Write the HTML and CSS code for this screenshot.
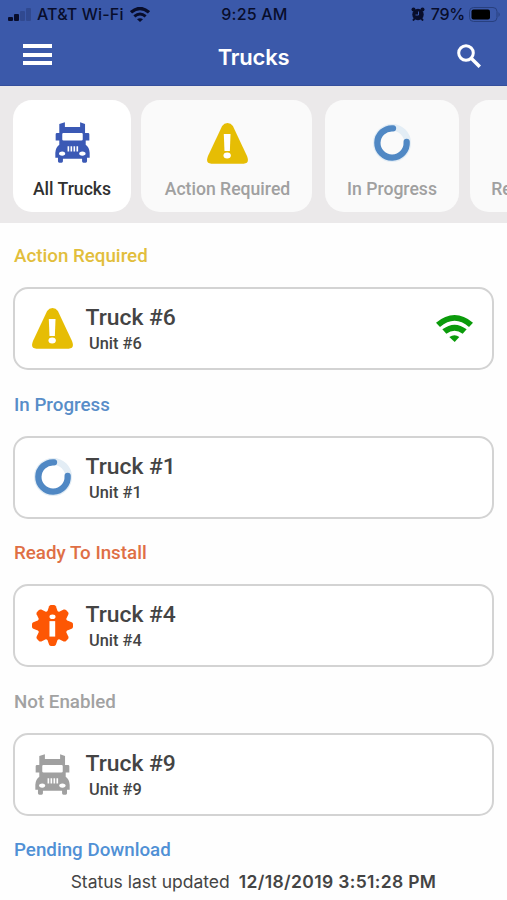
FILE: index.html
```html
<!DOCTYPE html>
<html lang="en">
<head>
<meta charset="utf-8">
<title>Trucks</title>
<link rel="stylesheet" href="styles.css">
</head>
<body>
<svg class="defs" width="0" height="0" aria-hidden="true">
  <symbol id="truck" viewBox="0 0 106 122">
    <path fill="currentColor" fill-rule="evenodd" d="M13 5L30 0V14H76V0L91 5V32H100Q104 32 104 36V55H93V68Q104 76 105 92V107H97V118Q97 122 93 122H86Q82 122 82 118V110H24V118Q24 122 20 122H13Q9 122 9 118V107H1V92Q2 76 13 68V55H2V36Q2 32 6 32H13ZM25 32Q22 32 22 36V52Q22 55 26 55H80Q84 55 84 52V36Q84 32 81 32ZM38 72V88H43V72ZM47 72V88H52V72ZM56 72V88H61V72ZM65 72V88H70V72ZM22 88C9 88 9 101 22 101C34 101 34 88 22 88ZM83 88C70 88 70 101 83 101C96 101 96 88 83 88Z"/>
  </symbol>
  <symbol id="warning" viewBox="0 0 122 122">
    <path fill="#e6bd04" d="M61 0Q71 0 77 9L119 98Q128 121 109 121H13Q-6 121 3 98L45 9Q51 0 61 0Z"/>
    <path fill="#fff" d="M50 33H70L68 83H52Z"/><ellipse cx="60" cy="97" rx="11" ry="9" fill="#fff"/>
  </symbol>
  <symbol id="progress" viewBox="0 0 114 114">
    <circle cx="57" cy="57" r="47" fill="none" stroke="#e3edf5" stroke-width="20"/>
    <path fill="none" stroke="#5088c4" stroke-width="19" stroke-linecap="round" d="M60 13A44 44 0 1 0 101 54"/>
  </symbol>
  <symbol id="gear" viewBox="-61 -61 122 122">
    <g fill="#fd5704"><circle r="45"/>
      <g id="teeth"><path id="tooth" d="M-16 -40L-10 -57Q-8 -61 -4 -61H4Q8 -61 10 -57L16 -40V40L10 57Q8 61 4 61H-4Q-8 61 -10 57L-16 40Z"/><use href="#tooth" transform="rotate(90)"/></g>
      <use href="#teeth" transform="rotate(45)"/>
    </g>
    <g fill="#fff"><ellipse cy="-26" rx="9" ry="7"/><path d="M-9 -13H8V33H-9Z"/></g>
  </symbol>
  <symbol id="wifi" viewBox="0 0 111 81">
    <g fill="currentColor"><path d="M0 23Q56 -23 111 23L99 36Q56 -1 12 36Z"/><path d="M19 43Q56 15 92 43L80 56Q56 38 31 56Z"/><path d="M40 66Q56 56 70 66L56 81Z"/></g>
  </symbol>
</svg>
<div class="app">
  <header class="top">
    <div class="status">
      <div class="carrier">
        <svg class="signal" viewBox="0 0 24 13"><rect y="9" width="5" height="4" rx="1"/><rect x="6" y="6" width="5" height="7" rx="1"/><g opacity=".2"><rect x="12" y="3" width="5" height="10" rx="1"/><rect x="18" width="5" height="13" rx="1"/></g></svg>
        <span class="network">AT&amp;T Wi-Fi</span>
        <svg class="status-wifi" viewBox="0 0 60 45"><g fill="none" stroke="#080d2b"><path stroke-width="10" d="M3 16Q30 -7 57 16"/><path stroke-width="9" d="M13 28Q30 14 47 28"/></g><path d="M21 37Q30 30 39 37L30 45Z"/></svg>
      </div>
      <span class="clock">9:25 AM</span>
      <div class="power">
        <svg class="alarm" viewBox="0 0 14 14"><circle cx="7" cy="7.5" r="5.7"/><circle cx="2.5" cy="2.5" r="2"/><circle cx="11.5" cy="2.5" r="2"/><path d="M2 13.5L4 11M12 13.5L10 11" stroke="#080d2b" stroke-width="2"/><path d="M7.5 4.5V8H4.5" fill="none" stroke="#3b59aa" stroke-width="1"/></svg>
        <span class="percent">79%</span>
        <svg class="battery" viewBox="0 0 32 15"><rect x=".5" y=".5" width="27.500" height="14" rx="4" fill="none" stroke="#28407f"/><rect x="2.500" y="2.500" width="18.500" height="10" rx="2" fill="#000"/><path d="M29.500 5Q32 7.500 29.500 10Z" fill="#28407f"/></svg>
      </div>
    </div>
    <div class="nav">
      <div class="menu"><i></i><i></i><i></i></div>
      <h1><span>Trucks</span></h1>
      <svg class="search" viewBox="0 0 24 24"><g fill="none" stroke="#fff" stroke-width="3"><circle cx="9" cy="9" r="7.300"/><path d="M14.200 14.200L22.800 22.800" stroke-width="3.500"/></g></svg>
    </div>
  </header>
  <nav class="filters">
    <div class="filter all"><svg class="truck"><use href="#truck"/></svg><span>All Trucks</span></div>
    <div class="filter action"><svg class="warning"><use href="#warning"/></svg><span>Action Required</span></div>
    <div class="filter running"><svg class="progress"><use href="#progress"/></svg><span>In Progress</span></div>
    <div class="filter ready"><svg class="gear"><use href="#gear"/></svg><span>Ready To Install</span></div>
  </nav>
  <main>
    <section>
      <h2 class="yellow"><span>Action Required</span></h2>
      <article><div class="icon"><svg class="warning"><use href="#warning"/></svg></div><div class="info"><h3>Truck #6</h3><p>Unit #6</p></div><svg class="online"><use href="#wifi"/></svg></article>
    </section>
    <section>
      <h2 class="blue"><span>In Progress</span></h2>
      <article><div class="icon"><svg class="progress"><use href="#progress"/></svg></div><div class="info"><h3>Truck #1</h3><p>Unit #1</p></div></article>
    </section>
    <section>
      <h2 class="orange"><span>Ready To Install</span></h2>
      <article><div class="icon"><svg class="gear"><use href="#gear"/></svg></div><div class="info"><h3>Truck #4</h3><p>Unit #4</p></div></article>
    </section>
    <section>
      <h2 class="gray"><span>Not Enabled</span></h2>
      <article><div class="icon"><svg class="truck"><use href="#truck"/></svg></div><div class="info"><h3>Truck #9</h3><p>Unit #9</p></div></article>
    </section>
    <section>
      <h2 class="sky"><span>Pending Download</span></h2>
    </section>
  </main>
  <footer><span>Status last updated</span><strong>12/18/2019 3:51:28 PM</strong></footer>
</div>
</body>
</html>
```

FILE: styles.css
```css
* { box-sizing: border-box; margin: 0; padding: 0; }
body { background: #fefefe; font-family: Roboto, sans-serif; color: #444; }
svg { display: block; flex: none; }
.defs { position: absolute; }
.app { width: 507px; height: 900px; overflow: hidden; display: flex; flex-direction: column; }
.top { height: 86px; flex: none; background: #3b59aa; border-bottom: 1px solid #354f9c; }
.status { height: 28px; display: grid; grid-template-columns: 1fr auto 1fr; align-items: center; padding: 0 6px 0 8px; font: 500 16px/28px Inter, sans-serif; color: #080d2b; fill: #080d2b; }
.carrier, .power { display: flex; align-items: center; }
.power { justify-content: flex-end; }
.signal { width: 24px; height: 13px; margin-right: 5px; }
.network { letter-spacing: .15px; }
.status-wifi { width: 20px; height: 15px; margin-left: 6px; }
.clock { letter-spacing: .2px; }
.alarm { width: 14px; height: 14px; margin-right: 6px; }
.percent { letter-spacing: -.2px; }
.battery { width: 32px; height: 15px; margin-left: 4px; }
.nav { height: 57px; display: flex; justify-content: space-between; align-items: center; padding: 0 26px 0 23px; }
.menu { width: 29px; height: 21px; display: flex; flex-direction: column; justify-content: space-between; margin-bottom: 4px; }
.menu i { height: 4px; background: #fff; }
h1 { font: 600 22px/30px Inter, sans-serif; letter-spacing: -.2px; color: #fff; margin-right: 2px; }
.search { width: 24px; height: 24px; margin-bottom: 2px; }
.filters { height: 137px; flex: none; display: flex; padding: 14px 0 0 13px; background: #ebe9ea; overflow: hidden; }
.filter { height: 112px; flex: none; display: flex; flex-direction: column; align-items: center; border-radius: 19px; background: #fafafa; color: #a0a0a0; font-size: 17.600px; font-weight: 500; line-height: 24px; padding-top: 22px; white-space: nowrap; }
.filter span { margin-top: auto; margin-bottom: 11px; }
.all { width: 118px; background: #fff; color: #303030; margin-right: 10px; }
.all .truck { color: #3b59b5; }
.action { width: 171px; margin-right: 13px; padding-left: 2px; }
.filter .warning { margin-top: 1px; }
.running { width: 134px; margin-right: 11px; }
.filter .progress { margin-top: 2px; }
.ready { width: 167px; }
.truck { width: 35px; height: 41px; color: #a0a0a0; }
.warning { width: 41px; height: 41px; }
.progress { width: 38px; height: 38px; }
.gear { width: 41px; height: 41px; }
main { padding: 21px 13px 0; flex: 1; min-height: 0; }
section { height: 148.550px; }
h2 { height: 43px; padding: 0 0 0 1px; font-size: 18.750px; font-weight: 500; line-height: 24px; }
.yellow { color: #e2be3c; }
.blue { color: #588dc8; }
.orange { color: #df6f45; }
.gray { color: #a2a2a2; }
.sky { color: #5090d5; }
article { height: 83px; border: 2.500px solid #d3d3d3; border-radius: 15px; background: #fff; display: flex; align-items: center; padding-right: 19px; }
.icon { width: 75px; flex: none; display: flex; justify-content: center; }
.info { height: 100%; padding-top: 14px; flex: 1; margin-left: -4.500px; }
h3 { font-size: 22.900px; font-weight: 500; line-height: 29px; }
p { font-size: 16.400px; font-weight: 500; line-height: 23px; padding-left: 3.500px; }
.online { width: 37px; height: 27px; color: #0b9b0b; }
footer { height: 36px; flex: none; display: flex; justify-content: center; align-items: center; font: 400 17.500px/24px Inter, sans-serif; gap: 9px; padding-bottom: 1px; }
footer strong { font-weight: 600; letter-spacing: .35px; }
```
